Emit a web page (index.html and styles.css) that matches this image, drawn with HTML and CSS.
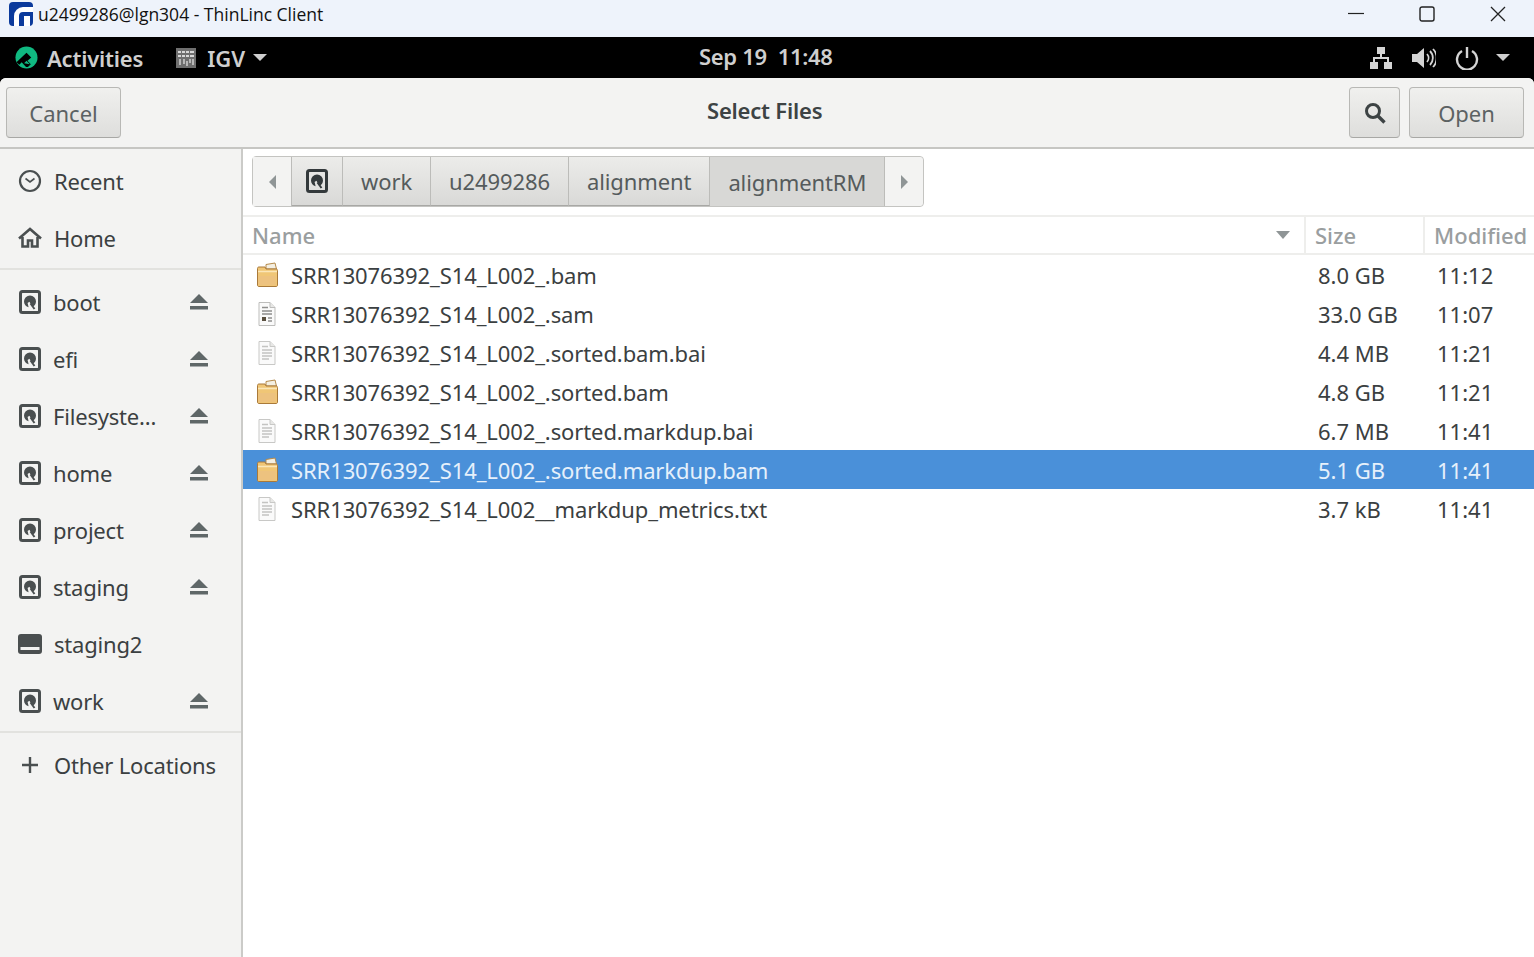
FILE: index.html
```html
<!DOCTYPE html>
<html>
<head>
<meta charset="utf-8">
<title>Select Files</title>
<link rel="stylesheet" href="styles.css">
</head>
<body>
<svg class="defs" width="0" height="0">
	<symbol id="drive" viewBox="0 0 22 24">
		<rect x="1.5" y="1.5" width="19" height="21" rx="2" fill="none" stroke="currentColor" stroke-width="3"/>
		<path d="M11 5.5a6 6 0 0 0-6 6c0 3 2 5.2 4.6 5.8l-1-4.3 1.8-1.2 3 5a6 6 0 0 0 3.600-5.300 6 6 0 0 0-6-6z" fill="currentColor"/>
		<path d="M11.500 13.500l4 5.500" stroke="currentColor" stroke-width="2"/>
	</symbol>
	<symbol id="eject" viewBox="0 0 20 18">
		<path d="M10 1l9 9H1z" fill="currentColor"/>
		<rect x="1" y="13" width="18" height="3.500" fill="currentColor"/>
	</symbol>
	<symbol id="pkg" viewBox="0 0 24 26">
		<path d="M11 2.500l9-1.500 1.500 6H11z" fill="#f4efe2" stroke="#b58a4a"/>
		<path d="M2.500 6.500c0-1 .6-1.500 1.500-1.500h6l1 2h10c1 0 1.500.5 1.500 1.500v14.500c0 1-.5 1.500-1.500 1.500H4c-.9 0-1.500-.5-1.500-1.500z" fill="#f0c676" stroke="#a9793a"/>
		<path d="M3 9.500h19" stroke="#fbe6b8" stroke-width="1.500"/>
		<path d="M3.500 14h17v9h-17z" fill="#edc27f"/>
	</symbol>
	<symbol id="doc" viewBox="0 0 20 26">
		<path d="M2 1.500h11l5 5v18H2z" fill="#fafafa" stroke="#c8c8c6"/>
		<path d="M13 1.500v5h5" fill="#e8e8e6" stroke="#c8c8c6"/>
		<path d="M5 6.500h6M5 10h10M5 13h10M5 16h10M5 19h7" stroke="#c4c4c2" stroke-width="1.300"/>
	</symbol>
	<symbol id="sam" viewBox="0 0 20 26">
		<path d="M2 1.500h11l5 5v18H2z" fill="#fafafa" stroke="#bdbdbb"/>
		<path d="M13 1.500v5h5" fill="#e8e8e6" stroke="#bdbdbb"/>
		<path d="M5 6.500h6M5 10h10M5 13h10M11 17h4M11 20h4" stroke="#8f8f8d" stroke-width="1.300"/>
		<rect x="5" y="16" width="4" height="4" fill="#5a5040"/>
	</symbol>
</svg>

<div class="client-bar">
	<div class="client-title">
		<svg class="client-logo" viewBox="0 0 24 24"><rect width="24" height="24" rx="4" fill="#0b3a9c"/><path d="M24 5h-10a9 9 0 0 0-9 9v10h5V14a4 4 0 0 1 4-4h10zM15 14h6v10h-6z" fill="#fff"/></svg>
		<span>u2499286@lgn304 - ThinLinc Client</span>
	</div>
	<div class="client-controls">
		<svg width="16" height="16" viewBox="0 0 16 16"><path d="M0 7.500h16" stroke="#222" stroke-width="1.200"/></svg>
		<svg width="16" height="16" viewBox="0 0 16 16"><rect x="1" y="1" width="14" height="14" rx="2" fill="none" stroke="#222" stroke-width="1.400"/></svg>
		<svg width="16" height="16" viewBox="0 0 16 16"><path d="M1 1l14 14M15 1L1 15" stroke="#222" stroke-width="1.300"/></svg>
	</div>
</div>

<div class="gnome-bar">
	<div class="gnome-left">
		<svg class="rocky" viewBox="0 0 24 24"><circle cx="12" cy="12" r="11.500" fill="#10b981"/><path d="M1.500 17L12 7l5 5-4 3.500 3.500 3.500-3 3-2-.2-4.500-4.800-2.500 2.500z" fill="#000"/><path d="M9.500 18l2.500-2.500 3.500 3.500" fill="#10b981"/></svg>
		<span class="activities">Activities</span>
		<svg class="app-icon" viewBox="0 0 20 20"><rect width="20" height="20" fill="#6f6f6f"/><path d="M2 3h3v2H2zM6 3h3v2H6zM10 3h3v2h-3zM14 3h4v2h-4zM2 7h3v2H2zM6 7h3v2H6zM10 7h3v2h-3zM14 7h4v2h-4z" fill="#d8d8d8"/><path d="M4 11v6M8 11v5M11 13v5M14 11v4M17 11v6" stroke="#e8e8e8" stroke-width="1.200"/></svg>
		<span class="app-name">IGV</span>
		<i class="caret"></i>
	</div>
	<div class="gnome-clock">Sep 19&nbsp; 11:48</div>
	<div class="gnome-right">
		<svg width="24" height="24" viewBox="0 0 24 24"><path d="M8 1h8v7H8zM1 16h8v7H1zM15 16h8v7h-8z" fill="#d4d4d4"/><path d="M12 8v4M5 16v-4h14v4" stroke="#d4d4d4" stroke-width="2" fill="none"/></svg>
		<svg width="24" height="24" viewBox="0 0 24 24"><path d="M0 8h5l7-6v20l-7-6H0z" fill="#d4d4d4"/><path d="M15 8a6 6 0 0 1 0 8M18 5a10 10 0 0 1 0 14M21 3a13 13 0 0 1 0 18" stroke="#d4d4d4" stroke-width="1.800" fill="none"/></svg>
		<svg width="24" height="24" viewBox="0 0 24 24"><path d="M7 5a10 10 0 1 0 10 0" stroke="#d4d4d4" stroke-width="2.400" fill="none"/><path d="M12 1v11" stroke="#d4d4d4" stroke-width="2.400"/></svg>
		<i class="caret"></i>
	</div>
</div>

<div class="dialog">
	<div class="header">
		<button class="btn btn-cancel">Cancel</button>
		<div class="header-title">Select Files</div>
		<button class="btn btn-search">
			<svg width="22" height="22" viewBox="0 0 22 22"><circle cx="9" cy="9" r="6.500" fill="none" stroke="#3d4344" stroke-width="3"/><path d="M13.500 13.500l7 7" stroke="#3d4344" stroke-width="3.400"/></svg>
		</button>
		<button class="btn btn-open">Open</button>
	</div>

	<div class="content">
		<div class="sidebar">
			<div class="side-group">
				<div class="side-row">
					<svg class="side-icon" viewBox="0 0 24 24"><circle cx="12" cy="12" r="10" fill="none" stroke="#4a4f50" stroke-width="2.200"/><path d="M7.500 9.500l4.500 3.500 4.500-3.500" fill="none" stroke="#4a4f50" stroke-width="1.600"/></svg>
					<span>Recent</span>
				</div>
				<div class="side-row">
					<svg class="side-icon" viewBox="0 0 24 24"><path d="M1 12.500L12 3l11 9.500M4.500 11v9.500h5.500v-6h4v6h5.500V11" fill="none" stroke="#4a4f50" stroke-width="2.600"/></svg>
					<span>Home</span>
				</div>
			</div>
			<div class="side-group">
				<div class="side-row"><svg class="side-icon drv"><use href="#drive"/></svg><span>boot</span><svg class="eject"><use href="#eject"/></svg></div>
				<div class="side-row"><svg class="side-icon drv"><use href="#drive"/></svg><span>efi</span><svg class="eject"><use href="#eject"/></svg></div>
				<div class="side-row"><svg class="side-icon drv"><use href="#drive"/></svg><span>Filesyste...</span><svg class="eject"><use href="#eject"/></svg></div>
				<div class="side-row"><svg class="side-icon drv"><use href="#drive"/></svg><span>home</span><svg class="eject"><use href="#eject"/></svg></div>
				<div class="side-row"><svg class="side-icon drv"><use href="#drive"/></svg><span>project</span><svg class="eject"><use href="#eject"/></svg></div>
				<div class="side-row"><svg class="side-icon drv"><use href="#drive"/></svg><span>staging</span><svg class="eject"><use href="#eject"/></svg></div>
				<div class="side-row">
					<svg class="side-icon" viewBox="0 0 24 24"><rect x="0" y="2" width="24" height="20" rx="3" fill="#4a4f50"/><rect x="2.500" y="15" width="19" height="3" fill="#f2f2f1"/></svg>
					<span>staging2</span>
				</div>
				<div class="side-row"><svg class="side-icon drv"><use href="#drive"/></svg><span>work</span><svg class="eject"><use href="#eject"/></svg></div>
			</div>
			<div class="side-group side-last">
				<div class="side-row">
					<svg class="side-icon" viewBox="0 0 24 24"><path d="M12 4v16M4 12h16" stroke="#4a4f50" stroke-width="2.400"/></svg>
					<span>Other Locations</span>
				</div>
			</div>
		</div>

		<div class="main">
			<div class="path-wrap">
				<div class="path-bar">
					<div class="crumb arrow"><i class="tri tri-left"></i></div>
					<div class="crumb crumb-drive"><svg class="path-drive"><use href="#drive"/></svg></div>
					<div class="crumb">work</div>
					<div class="crumb">u2499286</div>
					<div class="crumb">alignment</div>
					<div class="crumb crumb-on">alignmentRM</div>
					<div class="crumb arrow"><i class="tri tri-right"></i></div>
				</div>
			</div>

			<div class="list-head">
				<div class="col-name">Name<i class="sort"></i></div>
				<div class="col-size">Size</div>
				<div class="col-mod">Modified</div>
			</div>

			<div class="file"><svg class="file-icon"><use href="#pkg"/></svg><div class="col-name">SRR13076392_S14_L002_.bam</div><div class="col-size">8.0 GB</div><div class="col-mod">11:12</div></div>
			<div class="file"><svg class="file-icon"><use href="#sam"/></svg><div class="col-name">SRR13076392_S14_L002_.sam</div><div class="col-size">33.0 GB</div><div class="col-mod">11:07</div></div>
			<div class="file"><svg class="file-icon"><use href="#doc"/></svg><div class="col-name">SRR13076392_S14_L002_.sorted.bam.bai</div><div class="col-size">4.4 MB</div><div class="col-mod">11:21</div></div>
			<div class="file"><svg class="file-icon"><use href="#pkg"/></svg><div class="col-name">SRR13076392_S14_L002_.sorted.bam</div><div class="col-size">4.8 GB</div><div class="col-mod">11:21</div></div>
			<div class="file"><svg class="file-icon"><use href="#doc"/></svg><div class="col-name">SRR13076392_S14_L002_.sorted.markdup.bai</div><div class="col-size">6.7 MB</div><div class="col-mod">11:41</div></div>
			<div class="file selected"><svg class="file-icon"><use href="#pkg"/></svg><div class="col-name">SRR13076392_S14_L002_.sorted.markdup.bam</div><div class="col-size">5.1 GB</div><div class="col-mod">11:41</div></div>
			<div class="file"><svg class="file-icon"><use href="#doc"/></svg><div class="col-name">SRR13076392_S14_L002__markdup_metrics.txt</div><div class="col-size">3.7 kB</div><div class="col-mod">11:41</div></div>
		</div>
	</div>
</div>
</body>
</html>
```

FILE: styles.css
```css
html, body {
	margin: 0;
	height: 100%;
	overflow: hidden;
}
body {
	width: 1534px;
	height: 957px;
	background: #000;
	font-family: "Noto Sans", sans-serif;
	color: #2e3436;
	display: flex;
	flex-direction: column;
}
.defs {
	display: none;
}

/* outer client window bar */
.client-bar {
	height: 37px;
	background: #eef3fb;
	display: flex;
	justify-content: space-between;
	align-items: center;
	flex: none;
}
.client-title {
	display: flex;
	align-items: center;
	padding: 0 0 9px 9px;
	font-family: "Open Sans", sans-serif;
	font-size: 17.500px;
	color: #111;
	gap: 5px;
}
.client-logo {
	width: 24px;
	height: 24px;
}
.client-controls {
	display: flex;
	gap: 55px;
	padding: 0 28px 9px 0;
}

/* gnome top bar */
.gnome-bar {
	height: 41px;
	flex: none;
	background: #000;
	color: #cfcfcf;
	display: flex;
	justify-content: space-between;
	align-items: center;
	position: relative;
	font-size: 22px;
	font-weight: 600;
}
.gnome-left {
	display: flex;
	align-items: center;
	padding-left: 15px;
}
.rocky {
	width: 23px;
	height: 23px;
}
.activities {
	margin-left: 9px;
	letter-spacing: -0.200px;
}
.app-icon {
	width: 20px;
	height: 20px;
	margin-left: 33px;
}
.app-name {
	margin-left: 11px;
}
.caret {
	display: inline-block;
	border-top: 7px solid #cfcfcf;
	border-left: 7px solid transparent;
	border-right: 7px solid transparent;
	margin-left: 8px;
}
.gnome-clock {
	position: absolute;
	left: 699px;
	top: 4px;
	letter-spacing: -0.300px;
}
.gnome-right {
	display: flex;
	align-items: center;
	gap: 19px;
	padding-right: 24px;
}
.gnome-right .caret {
	margin-left: -2px;
}

/* file chooser */
.dialog {
	flex: 1;
	background: #fff;
	border-radius: 6px 6px 0 0;
	display: flex;
	flex-direction: column;
	min-height: 0;
}
.header {
	height: 69px;
	flex: none;
	background: #f3f3f2;
	border-bottom: 2px solid #c6c6c3;
	border-radius: 6px 6px 0 0;
	display: flex;
	align-items: center;
	padding: 0 10px 0 6px;
	position: relative;
	box-sizing: content-box;
}
.btn {
	height: 51px;
	border: 1px solid #b8b8b5;
	border-bottom-color: #a8a8a5;
	border-radius: 4px;
	background: linear-gradient(#f0f0ee, #dededc);
	font-family: "Noto Sans", sans-serif;
	font-size: 22px;
	color: #5c6263;
	padding: 0;
	display: flex;
	align-items: center;
	justify-content: center;
}
.btn-cancel {
	width: 115px;
}
.btn-search {
	width: 51px;
	margin-left: auto;
}
.btn-open {
	width: 115px;
	margin-left: 9px;
}
.header-title {
	position: absolute;
	left: 707px;
	top: 17px;
	font-size: 22px;
	font-weight: 600;
	color: #3d4344;
	letter-spacing: -0.200px;
}
.content {
	flex: 1;
	display: flex;
	min-height: 0;
}

/* places sidebar */
.sidebar {
	width: 241px;
	flex: none;
	background: #f3f3f2;
	border-right: 2px solid #cbcbc8;
}
.side-group {
	padding: 3px 0 2px;
	border-bottom: 2px solid #e2e2df;
}
.side-group:first-child {
	padding-top: 3px;
}
.side-last {
	border-bottom: none;
}
.side-row {
	height: 57px;
	display: flex;
	align-items: center;
	padding-left: 18px;
	font-size: 22px;
	color: #3b4041;
	letter-spacing: -0.200px;
}
.side-row span {
	margin-left: 12px;
	flex: 1;
}
.side-icon {
	width: 24px;
	height: 24px;
	flex: none;
}
.drv {
	color: #4a4f50;
	width: 22px;
	padding-left: 1px;
}
.eject {
	width: 20px;
	height: 18px;
	color: #5f6768;
	margin-right: 32px;
	flex: none;
}

/* path bar and file list */
.main {
	flex: 1;
	min-width: 0;
	background: #fff;
}
.path-wrap {
	height: 68px;
	box-sizing: border-box;
	padding: 7px 0 0 9px;
	border-bottom: 2px solid #eeeeec;
}
.path-bar {
	display: inline-flex;
	height: 51px;
	box-sizing: border-box;
	border: 1px solid #c4c4c1;
	border-radius: 4px;
	background: #f3f3f2;
	font-size: 22px;
	color: #555b5c;
}
.crumb {
	padding: 0 18px;
	display: flex;
	align-items: center;
	background: linear-gradient(#ececea, #d9d9d7);
	border-right: 1px solid #bcbcb9;
	border-bottom: 1px solid #a8a8a5;
	letter-spacing: -0.100px;
}
.crumb.arrow {
	background: #f3f3f2;
	border-bottom: none;
	padding: 0;
	width: 38px;
	justify-content: center;
}
.crumb.arrow:last-child {
	border-right: none;
	border-radius: 0 4px 4px 0;
}
.crumb-drive {
	padding: 0 14px;
}
.crumb-on {
	background: #d8d8d6;
	border-bottom: none;
}
.path-drive {
	width: 22px;
	height: 24px;
	color: #33393b;
}
.tri {
	display: block;
	border-top: 7px solid transparent;
	border-bottom: 7px solid transparent;
}
.tri-left {
	border-right: 7px solid #8f9596;
}
.tri-right {
	border-left: 7px solid #8f9596;
}
.list-head {
	height: 38px;
	display: flex;
	align-items: center;
	border-bottom: 2px solid #eeeeec;
	font-size: 22px;
	color: #9a9e9f;
	font-weight: 500;
	box-sizing: border-box;
}
.list-head > div {
	height: 100%;
	display: flex;
	align-items: center;
	box-sizing: border-box;
}
.list-head .col-name {
	width: 1063px;
	padding-left: 9px;
	justify-content: space-between;
	padding-right: 14px;
	border-right: 2px solid #eeeeec;
}
.list-head .col-size {
	width: 119px;
	padding-left: 9px;
	border-right: 2px solid #eeeeec;
}
.list-head .col-mod {
	padding-left: 9px;
}
.sort {
	border-top: 8px solid #8f9596;
	border-left: 7px solid transparent;
	border-right: 7px solid transparent;
}
.file {
	height: 39px;
	display: flex;
	align-items: center;
	font-size: 22px;
	color: #3b4041;
}
.file-icon {
	width: 24px;
	height: 26px;
	margin-left: 12px;
	flex: none;
}
.file .col-name {
	width: 1027px;
	margin-left: 12px;
	letter-spacing: -0.100px;
}
.file .col-size {
	width: 119px;
}
.selected {
	background: #4a90d9;
	color: #e6f0fb;
}
```
